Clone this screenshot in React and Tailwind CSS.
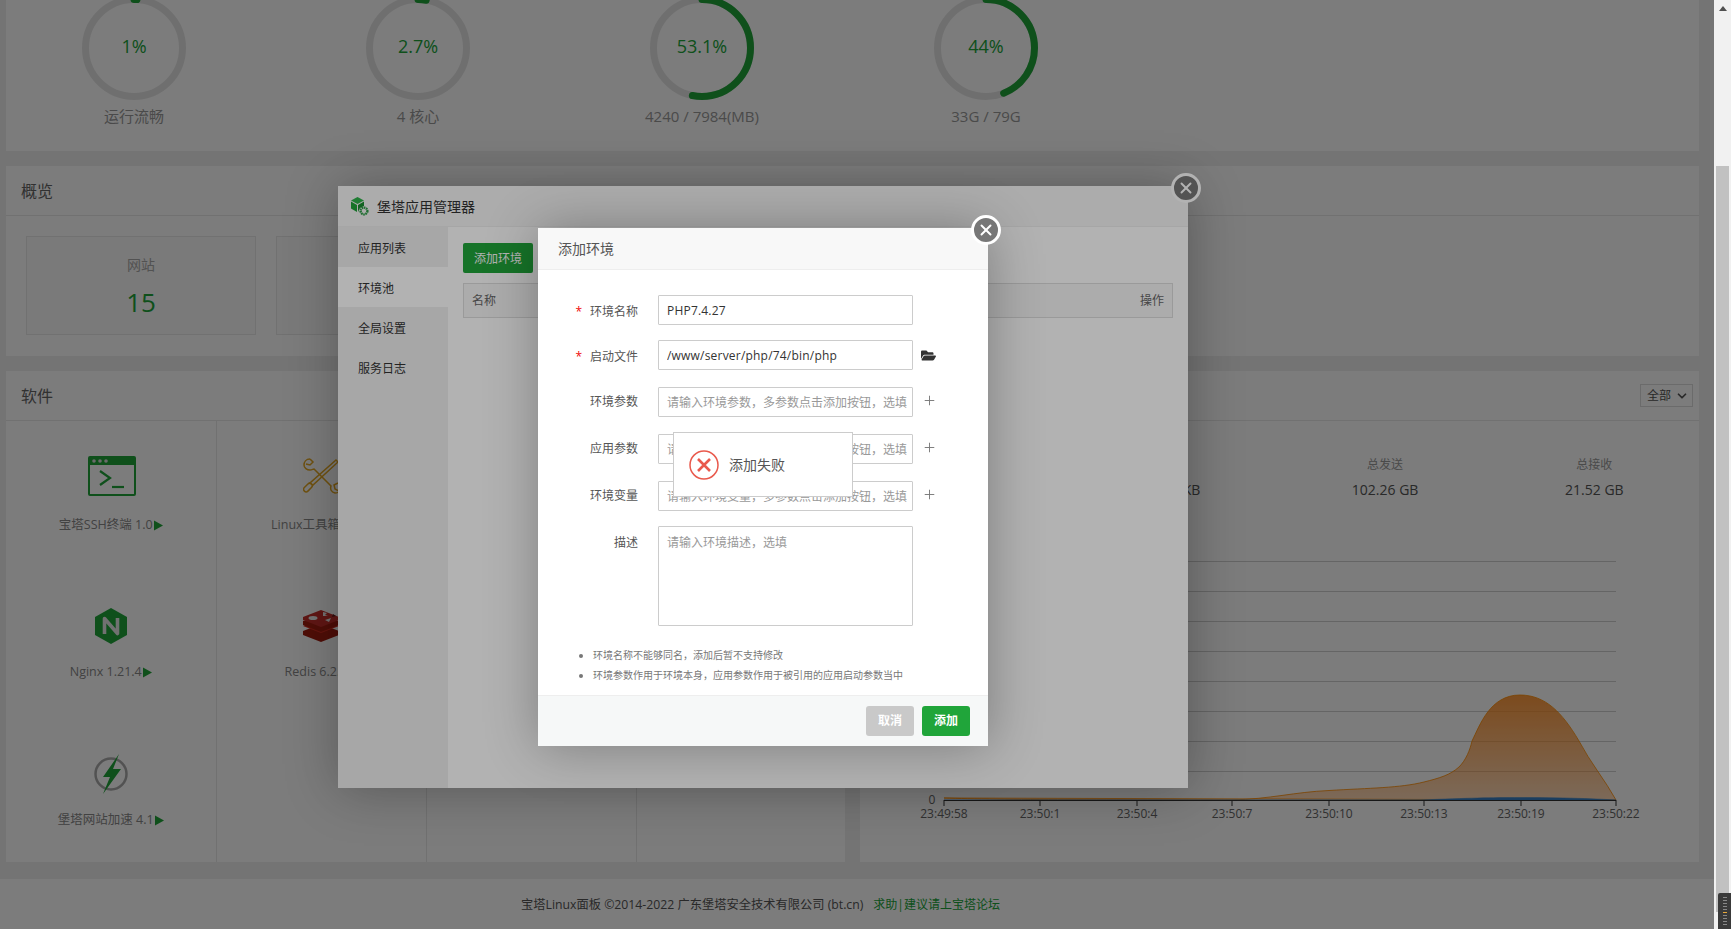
import { ChevronDown, Plus, X } from 'lucide-react';
import { FaFolderOpen } from 'react-icons/fa';

const GREEN = '#20a53a';

const rings = [
  { value: 1, text: '1%', label: '运行流畅' },
  { value: 2.7, text: '2.7%', label: '4 核心' },
  { value: 53.1, text: '53.1%', label: '4240 / 7984(MB)' },
  { value: 44, text: '44%', label: '33G / 79G' },
];

const overview = [
  { label: '网站', value: '15' },
  { label: 'FTP', value: '0' },
  { label: '数据库', value: '3' },
  { label: '安全风险', value: '6' },
];

const gridY = [561.5, 591.5, 621.5, 651.5, 681.5, 711.5, 741.5, 771.5];
const ticks = [
  [944, '23:49:58'],
  [1040, '23:50:1'],
  [1137, '23:50:4'],
  [1232, '23:50:7'],
  [1329, '23:50:10'],
  [1424, '23:50:13'],
  [1521, '23:50:19'],
  [1616, '23:50:22'],
];

function Ring({ value, text, label }) {
  const r = 48.5;
  const c = 2 * Math.PI * r;
  return (
    <div className="flex w-[104px] flex-col items-center">
      <div className="relative h-[104px] w-[104px]">
        <svg viewBox="0 0 104 104" className="h-[104px] w-[104px] -rotate-90">
          <circle cx="52" cy="52" r={r} fill="none" stroke="#e6e6e6" strokeWidth="7" />
          <circle
            cx="52"
            cy="52"
            r={r}
            fill="none"
            stroke={GREEN}
            strokeWidth="7"
            strokeLinecap="round"
            strokeDasharray={`${(c * value) / 100} ${c}`}
          />
        </svg>
        <div className="absolute inset-0 flex items-center justify-center pb-1 text-[18px] text-[#20a53a]">{text}</div>
      </div>
      <div className="mt-[6px] whitespace-nowrap text-[15px] leading-5 text-[#999]">{label}</div>
    </div>
  );
}

function TerminalIcon() {
  return (
    <svg viewBox="0 0 48 40" className="mb-1 ml-[2px] h-10 w-12">
      <rect x="1" y="1" width="46" height="38" rx="1" fill="none" stroke={GREEN} strokeWidth="2" />
      <rect x="1" y="1" width="46" height="8" fill={GREEN} />
      <circle cx="6" cy="5" r="1.8" fill="#ddd" />
      <circle cx="12" cy="5" r="1.8" fill="#ddd" />
      <circle cx="18" cy="5" r="1.8" fill="#ddd" />
      <path d="M12 15 L22 22 L12 29" fill="none" stroke={GREEN} strokeWidth="2.2" />
      <path d="M24 31 H36" fill="none" stroke={GREEN} strokeWidth="2.2" />
    </svg>
  );
}

function ToolsIcon() {
  return (
    <svg viewBox="0 0 36 36" className="mb-1 h-9 w-9" fill="none" stroke="#e5a823" strokeWidth="1.5">
      <path d="M7 1 C3 1 1 4 1 7 C1 10 4 12 7 12 C9 12 10 11 11 11 L28 28 C27 31 28 34 32 35 C34 35 36 34 36 33 L32 31 L31 27 L35 25" />
      <path d="M7 1 L10 4 L7 7 L3 6" />
      <path d="M33 2 L35 4 L10 27 L7 25 Z" />
      <rect x="-3" y="-2.5" width="10" height="5" rx="2.5" transform="translate(3.5 31) rotate(-45)" />
    </svg>
  );
}

function NginxIcon() {
  return (
    <svg viewBox="0 0 32 36" className="h-9 w-8">
      <polygon points="16,0 32,9 32,27 16,36 0,27 0,9" fill={GREEN} />
      <path d="M9.5 26 V10.5 L22.5 25.5 V10" fill="none" stroke="#e8e8e8" strokeWidth="3.6" strokeLinejoin="round" />
    </svg>
  );
}

function RedisIcon() {
  return (
    <svg viewBox="0 0 36 32" className="h-8 w-9">
      <polygon points="18,14 36,21 36,25 18,32 0,25 0,21" fill="#a41e11" />
      <polygon points="18,9 36,16 18,23 0,16" fill="#d82c20" />
      <polygon points="18,7 36,11 36,15 18,22 0,15 0,11" fill="#a41e11" />
      <polygon points="18,0 36,7 36,10 18,17 0,10 0,7" fill="#c6302b" />
      <ellipse cx="10" cy="8" rx="4.5" ry="2" fill="#eee" />
      <polygon points="22,10 28,8 26,12" fill="#eee" />
      <polygon points="20,2 24,3 22,5 25,6 20,6" fill="#eee" />
      <polygon points="30,4 33,6 29,7" fill="#621b1c" />
    </svg>
  );
}

function BoltIcon() {
  return (
    <svg viewBox="0 0 36 40" className="h-10 w-9">
      <circle cx="18" cy="20" r="15.5" fill="none" stroke="#aaa" strokeWidth="2.5" />
      <polygon points="26,0 10,23 17,23 10,40 28,15 20,15" fill={GREEN} />
    </svg>
  );
}

function Soft({ icon, label, last, first }) {
  return (
    <div className={`flex flex-col items-center border-[#e8e8e8] pt-8 ${last ? '' : 'border-r'}`}>
      <div className="flex h-[50px] items-center justify-center">{icon}</div>
      {label && (
        <div className={`flex h-[18px] items-center whitespace-nowrap text-[12.5px] text-[#888] ${first ? 'mt-[13px]' : 'mt-3'}`}>
          {label}
          <svg viewBox="0 0 9 10" className="ml-px h-[11px] w-[9px]">
            <polygon points="0,0 9,5 0,10" fill={GREEN} />
          </svg>
        </div>
      )}
    </div>
  );
}

function Chart() {
  return (
    <svg viewBox="860 540 839 290" className="mt-10 h-[290px] w-full">
      <defs>
        <linearGradient id="areaFill" gradientUnits="userSpaceOnUse" x1="0" y1="695" x2="0" y2="800">
          <stop offset="0" stopColor="rgb(255,130,15)" stopOpacity="0.8" />
          <stop offset="1" stopColor="rgb(255,130,15)" stopOpacity="0.3" />
        </linearGradient>
      </defs>
      {gridY.map((y) => (
        <line key={y} x1="944" x2="1616" y1={y} y2={y} stroke="#d0d0d0" />
      ))}
      <path
        d="M944 798 C1000 800 1120 800 1232 800 C1270 799 1295 792 1329 790.5 C1370 788 1400 788 1424 782 C1440 778 1450 775 1459 767 C1466 760 1470 750 1472 741 C1480 725 1490 695 1520 695 C1545 695 1562 712 1579 741 C1590 762 1605 780 1616 800 Z"
        fill="url(#areaFill)"
        stroke="rgb(255,140,0)"
        strokeWidth="0.8"
      />
      <path d="M944 800 H1420 C1470 798 1490 797.5 1520 797.5 C1560 797.5 1590 798.5 1616 800 Z" fill="#3b82c4" stroke="#3b82c4" strokeWidth="0.5" />
      <line x1="944" x2="1616" y1="800.5" y2="800.5" stroke="#333" />
      {ticks.map(([x, t]) => (
        <g key={x}>
          <line x1={x} x2={x} y1="800" y2="806" stroke="#333" />
          <text x={x} y="818" textAnchor="middle" fontSize="12" fill="#666">
            {t}
          </text>
        </g>
      ))}
      <text x="932" y="804" textAnchor="middle" fontSize="12" fill="#666">
        0
      </text>
    </svg>
  );
}

function Page() {
  return (
    <div className="-mt-5 flex h-[949px] flex-col bg-[#f0f0f0]">
      <div className="flex flex-1 flex-col gap-[15px] pr-[15px] pl-[6px]">
        <div className="flex h-[171px] gap-[180px] bg-white pt-4 pl-[76px]">
          {rings.map((r) => (
            <Ring key={r.label} {...r} />
          ))}
        </div>

        <div className="h-[190px] bg-white">
          <div className="flex h-[50px] items-center border-b border-[#e8e8e8] pl-[15px] text-[16px] text-[#666]">概览</div>
          <div className="flex gap-5 pt-5 pl-5">
            {overview.map((o) => (
              <div key={o.label} className="flex h-[99px] w-[230px] flex-col items-center border border-[#e8e8e8] bg-[#fbfbfb] pt-[18px]">
                <div className="text-[14px] leading-5 text-[#aaa]">{o.label}</div>
                <div className="mt-[9px] text-[26px] leading-9 text-[#20a53a]">{o.value}</div>
              </div>
            ))}
          </div>
        </div>

        <div className="flex h-[491px] gap-[15px]">
          <div className="flex w-[839px] flex-col bg-white">
            <div className="flex h-[50px] items-center border-b border-[#e8e8e8] pl-[15px] text-[16px] text-[#666]">软件</div>
            <div className="grid flex-1 grid-cols-[210.5px_210px_210px_1fr] grid-rows-[148px_148px_145px]">
              <Soft first icon={<TerminalIcon />} label="宝塔SSH终端 1.0" />
              <Soft first icon={<ToolsIcon />} label="Linux工具箱 1.8" />
              <Soft />
              <Soft last />
              <Soft icon={<NginxIcon />} label="Nginx 1.21.4" />
              <Soft icon={<RedisIcon />} label="Redis 6.2.6" />
              <Soft />
              <Soft last />
              <Soft icon={<BoltIcon />} label="堡塔网站加速 4.1" />
              <Soft />
              <Soft />
              <Soft last />
            </div>
          </div>

          <div className="w-[839px] bg-white">
            <div className="flex h-[50px] items-center justify-between border-b border-[#e8e8e8] pr-[6px] pl-[15px] text-[16px] text-[#666]">
              <span>流量</span>
              <div className="flex h-[23px] w-[53px] items-center justify-between border border-[#ddd] pr-[3px] pl-[6px] text-[12px] text-[#555]">
                全部
                <ChevronDown size={14} strokeWidth={3} />
              </div>
            </div>
            <div className="grid grid-cols-4 pt-[35px] pl-[2px] text-center">
              {[
                ['上行', '0.62 KB'],
                ['下行', '1.38 KB'],
                ['总发送', '102.26 GB'],
                ['总接收', '21.52 GB'],
              ].map(([label, val]) => (
                <div key={label}>
                  <div className="text-[12px] leading-[18px] text-[#999]">{label}</div>
                  <div className="mt-[6px] text-[14px] leading-5 text-[#555]">{val}</div>
                </div>
              ))}
            </div>
            <Chart />
          </div>
        </div>
      </div>

      <div className="mt-[17px] flex h-[50px] items-center justify-center bg-white pt-[2px] pr-[193px] text-[12px] text-[#555]">
        <span className="text-[12.25px]">宝塔Linux面板 ©2014-2022 广东堡塔安全技术有限公司 (bt.cn)</span>
        <span className="ml-[10px] text-[#20a53a]">求助|建议请上宝塔论坛</span>
      </div>
    </div>
  );
}

function CloseBtn() {
  return (
    <div className="absolute -top-[13px] -right-[13px] flex h-[30px] w-[30px] items-center justify-center rounded-full border-[3px] border-white bg-[#777] text-white">
      <X size={18} strokeWidth={2.6} />
    </div>
  );
}

function AppManager() {
  return (
    <div className="absolute top-[186px] left-[338px] h-[602px] w-[850px] bg-white shadow-[1px_1px_50px_rgba(0,0,0,0.3)]">
      <CloseBtn />
      <div className="flex h-[41px] items-center border-b border-[#eee] bg-[#f6f6f6] pl-3 text-[14px] text-[#333]">
        <svg viewBox="0 0 20 20" className="mr-[7px] h-5 w-5">
          <polygon points="7.5,1 14,4.5 7.5,8 1,4.5" fill="#2db34a" />
          <polygon points="1,5.5 7,9 7,16 1,12.5" fill={GREEN} />
          <polygon points="14,5.5 14,10 10,12 8,16 8,9" fill="#1b8f32" />
          <circle cx="14" cy="15" r="3.4" fill="none" stroke="#2f9e48" strokeWidth="2.4" strokeDasharray="1.6 0.6" />
        </svg>
        堡塔应用管理器
      </div>
      <div className="flex h-[561px]">
        <div className="flex w-[110px] flex-col bg-[#f0f0f0] text-[12px] text-[#333]">
          {['应用列表', '环境池', '全局设置', '服务日志'].map((t, i) => (
            <div key={t} className={`flex h-10 items-center pt-[3px] pl-5 ${i === 1 ? 'bg-white' : ''}`}>
              {t}
            </div>
          ))}
        </div>
        <div className="flex flex-1 flex-col pt-4 pr-[15px] pl-[15px]">
          <div className="flex h-[30px] w-[70px] items-center justify-center rounded-[2px] bg-[#20a53a] pt-px text-[12px] text-white">添加环境</div>
          <div className="mt-[10px] flex h-[35px] items-center justify-between border border-[#ddd] bg-[#f6f6f6] px-[8px] text-[12px] text-[#666]">
            <span>名称</span>
            <span>操作</span>
          </div>
        </div>
      </div>
    </div>
  );
}

function Field({ label, required, value, placeholder, after, className }) {
  return (
    <div className={`flex items-center ${className}`}>
      <div className={`w-[120px] pr-5 text-right text-[12px] text-[#555] ${required ? 'pt-[3px]' : ''}`}>
        {required && <span className="mr-2 text-[#ef0808]">*</span>}
        {label}
      </div>
      <input
        readOnly
        value={value ?? ''}
        placeholder={placeholder}
        className={`h-[30px] w-[255px] rounded-[1px] border border-[#ccc] pt-px pr-[5px] pl-2 text-[12px] text-[#333] outline-none placeholder:text-[#999] ${value ? 'tracking-[0.2px]' : ''}`}
      />
      {after}
    </div>
  );
}

const AddBtn = () => <Plus size={15} strokeWidth={1.5} className="-mt-1 ml-[9px] text-[#777]" />;

function AddEnv() {
  return (
    <div className="absolute top-[228px] left-[538px] flex h-[518px] w-[450px] flex-col bg-white shadow-[1px_1px_50px_rgba(0,0,0,0.3)]">
      <CloseBtn />
      <div className="flex h-[42px] items-center border-b border-[#eee] bg-[#f8f8f8] pl-5 text-[14px] text-[#555]">添加环境</div>
      <div className="flex-1 pt-[25px]">
        <Field required label="环境名称" value="PHP7.4.27" />
        <Field
          required
          className="mt-[15px]"
          label="启动文件"
          value="/www/server/php/74/bin/php"
          after={<FaFolderOpen size={15} className="ml-2 text-[#333]" />}
        />
        <Field className="mt-[17px]" label="环境参数" placeholder="请输入环境参数，多参数点击添加按钮，选填" after={<AddBtn />} />
        <Field className="mt-[17px]" label="应用参数" placeholder="请输入应用参数，多参数点击添加按钮，选填" after={<AddBtn />} />
        <Field className="mt-[17px]" label="环境变量" placeholder="请输入环境变量，多参数点击添加按钮，选填" after={<AddBtn />} />
        <div className="mt-[15px] flex">
          <div className="w-[120px] pt-2 pr-5 text-right text-[12px] text-[#555]">描述</div>
          <textarea
            readOnly
            placeholder="请输入环境描述，选填"
            className="h-[100px] w-[255px] resize-none rounded-[1px] border border-[#ccc] px-2 py-[7px] text-[12px] outline-none placeholder:text-[#999]"
          />
        </div>
        <ul className="mt-[19px] list-disc pl-[55px] text-[10px] leading-[20px] text-[#777] marker:text-[#777]">
          <li>环境名称不能够同名，添加后暂不支持修改</li>
          <li>环境参数作用于环境本身，应用参数作用于被引用的应用启动参数当中</li>
        </ul>
      </div>
      <div className="flex h-[51px] items-center justify-end gap-2 border-t border-[#eee] bg-[#f6f8f8] pr-[18px] text-[12px] font-bold text-white">
        <div className="flex h-[30px] w-12 items-center justify-center rounded-[3px] bg-[#c9c9c9]">取消</div>
        <div className="flex h-[30px] w-12 items-center justify-center rounded-[3px] bg-[#20a53a]">添加</div>
      </div>
    </div>
  );
}

function FailToast() {
  return (
    <div className="absolute top-[432px] left-[673px] flex h-[65px] w-[180px] items-center border border-[#ccc] bg-white pl-[15px] text-[14px] text-[#555]">
      <svg viewBox="0 0 30 30" className="mr-[10px] h-[30px] w-[30px]" fill="none" stroke="#e9594c">
        <circle cx="15" cy="15" r="14" strokeWidth="1.5" />
        <path d="M9 9 L21 21 M21 9 L9 21" strokeWidth="2.6" />
      </svg>
      添加失败
    </div>
  );
}

function Scrollbar() {
  const marks = [0, 1, 2, 3, 4, 5, 6, 7, 8, 9];
  return (
    <div className="relative flex w-[17px] flex-col bg-[#f1f1f1]">
      <div className="flex h-[17px] items-center justify-center text-[#505050]">
        <svg viewBox="0 0 8 5" className="h-[5px] w-2">
          <polygon points="4,0 8,5 0,5" fill="currentColor" />
        </svg>
      </div>
      <div className="mt-[149px] ml-[2px] h-[746px] w-[13px] bg-[#c1c1c1]" />
      <div className="absolute right-0 bottom-0 flex h-9 w-[13px] flex-col items-center gap-[2px] rounded-tl-[2px] bg-[#3a3a3a] pt-1">
        {marks.map((m) => (
          <span key={m} className={`h-px w-[4px] ${m === 5 ? 'bg-[#e9a93a]' : 'bg-[#888]'}`} />
        ))}
      </div>
    </div>
  );
}

export default function App() {
  return (
    <div className="flex h-screen w-full overflow-hidden font-['Open_Sans','Noto_Sans_CJK_SC',sans-serif]">
      <div className="relative flex-1 overflow-hidden">
        <Page />
        <div className="absolute inset-0 bg-black/30" />
        <AppManager />
        <div className="absolute inset-0 bg-black/30" />
        <AddEnv />
        <FailToast />
      </div>
      <Scrollbar />
    </div>
  );
}
